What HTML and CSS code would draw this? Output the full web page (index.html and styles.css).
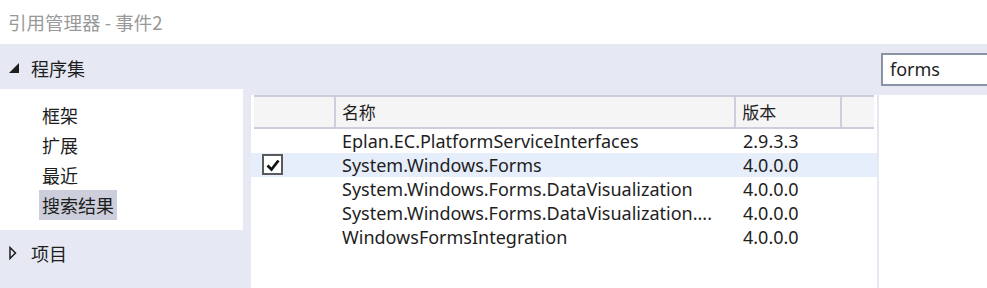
FILE: index.html
```html
<!DOCTYPE html>
<html>
<head>
  <meta charset="utf-8">
  <title>引用管理器 - 事件2</title>
  <link rel="stylesheet" href="styles.css">
</head>
<body>
  <div class="title">引用管理器 - 事件2</div>
  <div class="main">
    <aside class="side">
      <div class="group open">
        <svg class="tri" width="12" height="12" viewBox="0 0 12 12"><polygon points="11,1 11,11 1,11" fill="#1e1e1e"/></svg>
        程序集
      </div>
      <ul class="nav">
        <li>框架</li>
        <li>扩展</li>
        <li>最近</li>
        <li class="active">搜索结果</li>
      </ul>
      <div class="group">
        <svg class="tri" width="12" height="14" viewBox="0 0 12 14"><polygon points="2,1.5 7.5,7 2,12.5" fill="none" stroke="#1e1e1e" stroke-width="1.5"/></svg>
        项目
      </div>
      <div class="group">
        <svg class="tri" width="12" height="14" viewBox="0 0 12 14"><polygon points="2,1.5 7.5,7 2,12.5" fill="none" stroke="#1e1e1e" stroke-width="1.5"/></svg>
        共享的项目
      </div>
    </aside>

    <section class="content">
      <div class="toolbar">
        <div></div>
        <div class="search">forms</div>
      </div>
      <div class="panes">
        <div class="list">
          <div class="head">
            <div class="cell chk"></div>
            <div class="cell name">名称</div>
            <div class="cell ver">版本</div>
            <div class="cell fill"></div>
          </div>
          <div class="row">
            <div class="cell chk"></div>
            <div class="cell name">Eplan.EC.PlatformServiceInterfaces</div>
            <div class="cell ver">2.9.3.3</div>
          </div>
          <div class="row selected">
            <div class="cell chk">
              <span class="box">
                <svg width="16" height="16" viewBox="0 0 16 16"><path d="M2.5 8.5 L6.5 12.5 L13.5 3.5" fill="none" stroke="#111" stroke-width="2.8"/></svg>
              </span>
            </div>
            <div class="cell name">System.Windows.Forms</div>
            <div class="cell ver">4.0.0.0</div>
          </div>
          <div class="row">
            <div class="cell chk"></div>
            <div class="cell name">System.Windows.Forms.DataVisualization</div>
            <div class="cell ver">4.0.0.0</div>
          </div>
          <div class="row">
            <div class="cell chk"></div>
            <div class="cell name">System.Windows.Forms.DataVisualization....</div>
            <div class="cell ver">4.0.0.0</div>
          </div>
          <div class="row">
            <div class="cell chk"></div>
            <div class="cell name">WindowsFormsIntegration</div>
            <div class="cell ver">4.0.0.0</div>
          </div>
        </div>
        <div class="detail"></div>
      </div>
    </section>
  </div>
</body>
</html>
```

FILE: styles.css
```css
body {
  margin: 0;
  height: 288px;
  overflow: hidden;
  background: #e6e9f4;
  color: #1e1e1e;
  font-family: "Noto Sans", "Noto Sans CJK SC", sans-serif;
}

.title {
  height: 44px;
  background: #ffffff;
  color: #999999;
  font-family: "Noto Sans CJK SC", sans-serif;
  font-size: 18.5px;
  line-height: 44px;
  padding-left: 8px;
}

.main {
  display: flex;
  height: 244px;
}

/* left tree */
.side {
  width: 243px;
  flex-shrink: 0;
  font-family: "Noto Sans CJK SC", sans-serif;
  font-size: 18px;
}

.group {
  display: flex;
  align-items: center;
  height: 40px;
  padding-top: 3px;
}

.group.open {
  height: 42px;
}

.tri {
  width: 12px;
  margin: 0 11px 0 8px;
}

.nav {
  list-style: none;
  margin: 0;
  padding: 11px 0 10px 39px;
  background: #ffffff;
}

.nav li {
  display: table;
  height: 30px;
  line-height: 30px;
  padding: 0 3px;
}

.nav li.active {
  background: #cccedb;
}

/* right side */
.content {
  flex: 1;
  margin-left: 8px;
  display: flex;
  flex-direction: column;
}

.toolbar {
  display: grid;
  grid-template-columns: 628px 1fr;
  height: 51px;
}

.search {
  margin: 9px 0 0 2px;
  height: 29px;
  width: 200px;
  border: 2px solid #8a93a6;
  background: #ffffff;
  font-size: 18px;
  line-height: 28px;
  padding-left: 7px;
}

.panes {
  flex: 1;
  display: grid;
  grid-template-columns: 627px 1px 1fr;
}

.list {
  background: #ffffff;
  font-size: 18px;
  border-right: 1px solid #e4e7f2;
}

.detail {
  grid-column: 3;
  background: #ffffff;
}

.head {
  display: flex;
  margin: 0 3px;
  height: 30px;
  background: #f5f5f5;
  border-top: 2px solid #cccedb;
  border-bottom: 2px solid #cccedb;
  font-family: "Noto Sans CJK SC", sans-serif;
  font-size: 17px;
}

.head .cell {
  border-right: 2px solid #cccedb;
  line-height: 30px;
}

.head .cell.fill {
  border-right: none;
}

.cell {
  padding-left: 6px;
  white-space: nowrap;
  overflow: hidden;
}

.cell.chk {
  width: 80px;
  padding: 0;
}

.cell.name {
  width: 393px;
}

.cell.ver {
  width: 98px;
}

.cell.fill {
  width: 32px;
  padding: 0;
}

.row {
  display: flex;
  height: 24px;
  line-height: 24px;
  padding-left: 3px;
}

.row .cell.chk,
.row .cell.name,
.row .cell.ver {
  margin-right: 2px;
}

.row.selected {
  background: #e6edfb;
}

.box {
  display: flex;
  align-items: center;
  justify-content: center;
  width: 17px;
  height: 17px;
  margin: 1px 0 0 8px;
  border: 2px solid #5a5a5a;
  background: #ffffff;
}
```
